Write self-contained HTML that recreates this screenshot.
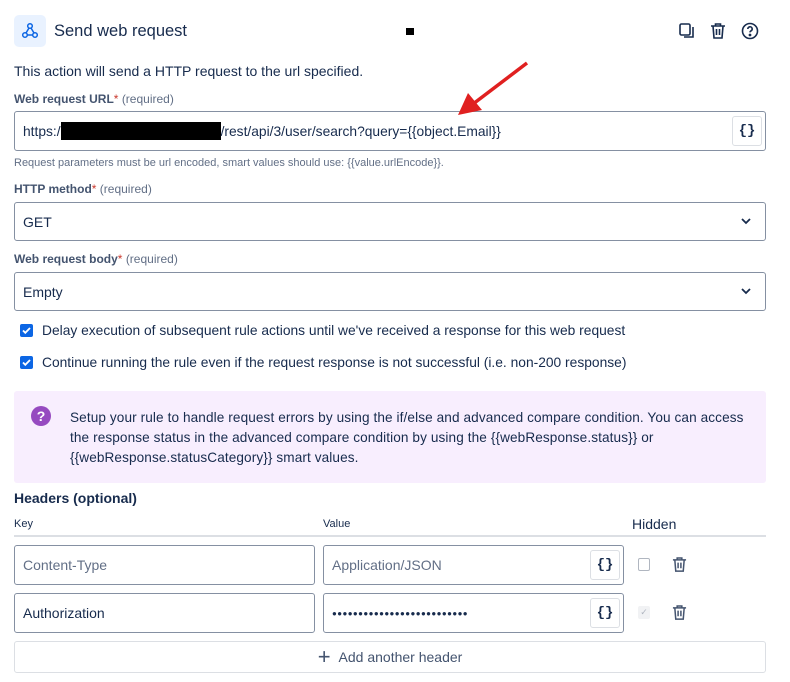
<!DOCTYPE html>
<html><head><style>
body{margin:0;width:790px;height:682px;background:#fff;font-family:"Liberation Sans",sans-serif;color:#172b4d;position:relative;overflow:hidden}
.a{position:absolute}
.lbl{font-size:12px;font-weight:bold;color:#44546f}
.lbl span{color:#c9372c;font-weight:normal}
.lbl i{font-style:normal;font-weight:normal;color:#626f86}
.inp{border:1px solid #8590a2;border-radius:3px;box-sizing:border-box;background:#fff;font-size:14px;display:flex;align-items:center;padding-left:8px}
.br{position:absolute;width:30px;height:30px;border:1px solid #dcdfe4;border-radius:3px;box-sizing:border-box;font-family:"Liberation Mono",monospace;font-weight:bold;font-size:14px;display:flex;align-items:center;justify-content:center;color:#172b4d}
.cb{width:13px;height:13px;border-radius:2px;background:#0c66e4;display:flex;align-items:center;justify-content:center}
</style></head><body>
<div class="a" style="left:14px;top:15px;width:32px;height:32px;background:#e9f2ff;border-radius:5px;display:flex;align-items:center;justify-content:center">
<svg width="18" height="18" viewBox="0 0 18 18" fill="none" stroke="#0c66e4" stroke-width="1.5"><circle cx="9" cy="4" r="2.3"/><circle cx="4" cy="13" r="2.3"/><circle cx="14" cy="13" r="2.3"/><path d="M8 6L5 11M6.3 13H11.7M10 6l3 5"/></svg></div>
<div class="a" style="left:54px;top:22px;font-size:16.5px;color:#172b4d">Send web request</div>
<div class="a" style="left:406px;top:28px;width:8px;height:7px;background:#000"></div>
<svg class="a" style="left:678px;top:22px" width="18" height="18" viewBox="0 0 18 18" fill="none" stroke="#172b4d" stroke-width="1.6"><rect x="2" y="2" width="10" height="11" rx="1.5"/><path d="M15 5v10H6"/></svg>
<svg class="a" style="left:710px;top:22px" width="16" height="18" viewBox="0 0 16 18" fill="none" stroke="#172b4d" stroke-width="1.6"><path d="M1 4h14M5.5 4V2h5v2M3 4l1 12h8l1-12M6.5 7v6M9.5 7v6"/></svg>
<svg class="a" style="left:741px;top:22px" width="18" height="18" viewBox="0 0 18 18" fill="none" stroke="#172b4d" stroke-width="1.6"><circle cx="9" cy="9" r="7.5"/><path d="M6.8 7a2.2 2.2 0 1 1 3 2c-.6.3-.8.7-.8 1.4"/><circle cx="9" cy="13" r=".6" fill="#172b4d"/></svg>
<div class="a" style="left:14px;top:63px;font-size:14px">This action will send a HTTP request to the url specified.</div>
<div class="a lbl" style="left:14px;top:92px">Web request URL<span>*</span> <i>(required)</i></div>
<div class="a inp" style="left:14px;top:111px;width:752px;height:40px;font-size:13.8px">https:/<span style="display:inline-block;width:160px;height:18px;background:#000"></span>/rest/api/3/user/search?query={{object.Email}}</div>
<div class="br" style="left:732px;top:116px">{}</div>
<svg class="a" style="left:455px;top:60px" width="75" height="60" viewBox="0 0 75 60"><path d="M72 3L18 44" stroke="#e02020" stroke-width="3.5"/><path d="M3 55L13 33L27 50Z" fill="#e02020"/></svg>
<div class="a" style="left:14px;top:157px;font-size:11px;color:#626f86">Request parameters must be url encoded, smart values should use: {{value.urlEncode}}.</div>
<div class="a lbl" style="left:14px;top:182px">HTTP method<span>*</span> <i>(required)</i></div>
<div class="a inp" style="left:14px;top:202px;width:752px;height:39px">GET</div>
<svg class="a" style="left:740px;top:216px" width="12" height="10" viewBox="0 0 12 10" fill="none" stroke="#172b4d" stroke-width="1.8"><path d="M2 3l4 4 4-4"/></svg>
<div class="a lbl" style="left:14px;top:252px">Web request body<span>*</span> <i>(required)</i></div>
<div class="a inp" style="left:14px;top:272px;width:752px;height:39px">Empty</div>
<svg class="a" style="left:740px;top:286px" width="12" height="10" viewBox="0 0 12 10" fill="none" stroke="#172b4d" stroke-width="1.8"><path d="M2 3l4 4 4-4"/></svg>
<div class="a cb" style="left:20px;top:324px"><svg width="9" height="9" viewBox="0 0 9 9" fill="none" stroke="#fff" stroke-width="1.8"><path d="M1 4.5l2.3 2.3L8 2"/></svg></div>
<div class="a" style="left:42px;top:323px;font-size:13.8px">Delay execution of subsequent rule actions until we've received a response for this web request</div>
<div class="a cb" style="left:20px;top:356px"><svg width="9" height="9" viewBox="0 0 9 9" fill="none" stroke="#fff" stroke-width="1.8"><path d="M1 4.5l2.3 2.3L8 2"/></svg></div>
<div class="a" style="left:42px;top:355px;font-size:13.8px">Continue running the rule even if the request response is not successful (i.e. non-200 response)</div>
<div class="a" style="left:14px;top:391px;width:752px;height:92px;background:#f8eefe;border-radius:3px"></div>
<div class="a" style="left:31px;top:406px;width:20px;height:20px;border-radius:50%;background:#964ac0;color:#fff;font-weight:bold;font-size:14px;text-align:center;line-height:20px">?</div>
<div class="a" style="left:70px;top:408px;width:694px;font-size:13.6px;line-height:20px;white-space:nowrap;letter-spacing:0.1px">Setup your rule to handle request errors by using the if/else and advanced compare condition. You can access<br>the response status in the advanced compare condition by using the {{webResponse.status}} or<br>{{webResponse.statusCategory}} smart values.</div>
<div class="a" style="left:14px;top:490px;font-size:14px;font-weight:bold">Headers (optional)</div>
<div class="a" style="left:14px;top:518px;font-size:11px">Key</div>
<div class="a" style="left:323px;top:518px;font-size:11px">Value</div>
<div class="a" style="left:632px;top:516px;font-size:14px">Hidden</div>
<div class="a" style="left:14px;top:535px;width:752px;height:2px;background:#dcdfe4"></div>
<div class="a inp" style="left:14px;top:545px;width:301px;height:40px;color:#626f86">Content-Type</div>
<div class="a inp" style="left:323px;top:545px;width:301px;height:40px;color:#626f86">Application/JSON</div>
<div class="br" style="left:590px;top:550px">{}</div>
<div class="a" style="left:638px;top:558px;width:12px;height:13px;border:1.5px solid #b0b6c0;border-radius:2px;box-sizing:border-box"></div>
<div class="a inp" style="left:14px;top:593px;width:301px;height:40px">Authorization</div>
<div class="a inp" style="left:323px;top:593px;width:301px;height:40px;font-size:8px;letter-spacing:0.4px;font-weight:bold">●●●●●●●●●●●●●●●●●●●●●●●●●●</div>
<div class="br" style="left:590px;top:598px">{}</div>
<div class="a" style="left:638px;top:606px;width:12px;height:13px;background:#f1f2f4;border-radius:2px;color:#b0b6c0;font-size:9px;text-align:center;line-height:13px">✓</div>
<svg class="a" style="left:672px;top:556px" width="15" height="17" viewBox="0 0 16 18" fill="none" stroke="#44546f" stroke-width="1.6"><path d="M1 4h14M5.5 4V2h5v2M3 4l1 12h8l1-12M6.5 7v6M9.5 7v6"/></svg>
<svg class="a" style="left:672px;top:604px" width="15" height="17" viewBox="0 0 16 18" fill="none" stroke="#44546f" stroke-width="1.6"><path d="M1 4h14M5.5 4V2h5v2M3 4l1 12h8l1-12M6.5 7v6M9.5 7v6"/></svg>
<div class="a" style="left:14px;top:641px;width:752px;height:32px;border:1px solid #dcdfe4;border-radius:3px;box-sizing:border-box;display:flex;align-items:center;justify-content:center;font-size:14px;color:#44546f"><span style="font-size:22px;font-weight:300;margin-right:8px;line-height:1">+</span>Add another header</div>
</body></html>
